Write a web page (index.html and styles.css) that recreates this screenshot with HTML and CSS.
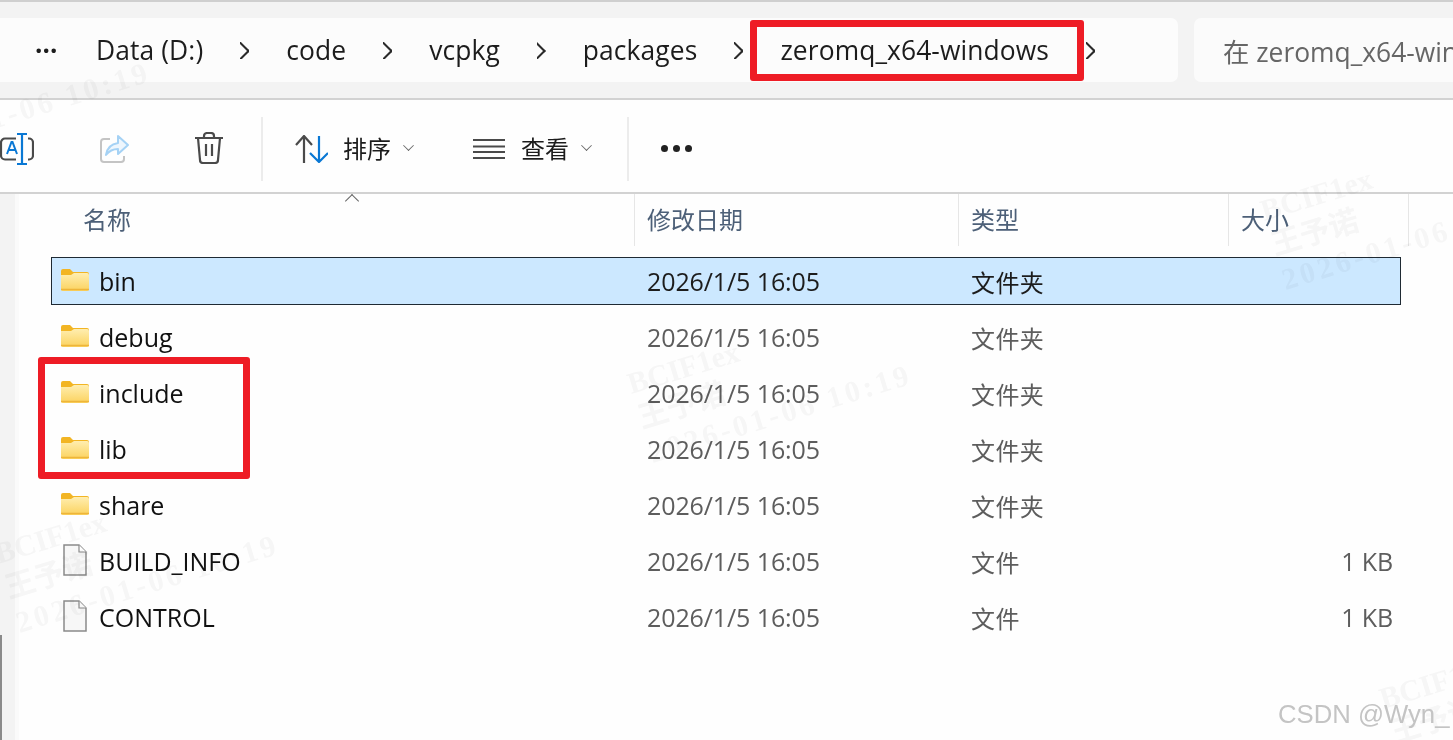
FILE: index.html
```html
<!DOCTYPE html>
<html lang="zh">
<head>
<meta charset="utf-8">
<title>zeromq_x64-windows</title>
<link rel="stylesheet" href="styles.css">
</head>
<body>
<svg class="defs" width="0" height="0">
  <defs>
    <linearGradient id="fg" x1="0" y1="0" x2="0" y2="1"><stop offset="0" stop-color="#ffeeb0"/><stop offset="1" stop-color="#fbd25e"/></linearGradient>
    <symbol id="folder" viewBox="0 0 28 22">
      <path d="M0 2a2 2 0 0 1 2-2h7l3 3h14a2 2 0 0 1 2 2v4H0z" fill="#f2b524"/>
      <path d="M0 6h10l3-2h13a2 2 0 0 1 2 2v14a2 2 0 0 1-2 2H2a2 2 0 0 1-2-2z" fill="url(#fg)"/>
      <path d="M0 20.500h28" stroke="#eeb53a" stroke-width="1.500"/>
    </symbol>
    <symbol id="file" viewBox="0 0 24 32">
      <path d="M1 1h15l7 7v23H1z" fill="#f7f7f7" stroke="#8a8a8a" stroke-width="1.500"/>
      <path d="M16 1v7h7" fill="#fff" stroke="#8a8a8a" stroke-width="1.200"/>
    </symbol>
  </defs>
</svg>
<div class="window">
  <header class="topbar">
    <nav class="address">
      <span class="more">···</span>
      <span>Data (D:)</span><span class="chev"></span>
      <span>code</span><span class="chev"></span>
      <span>vcpkg</span><span class="chev"></span>
      <span>packages</span><span class="chev"></span>
      <span>zeromq_x64-windows</span><span class="chev"></span>
    </nav>
    <div class="search">在 zeromq_x64-windows 中搜索</div>
  </header>
  <section class="toolbar">
    <svg class="ic-rename" width="34" height="32" viewBox="0 0 34 32" fill="none">
      <path d="M16 5.500H5a4 4 0 0 0-4 4v13a4 4 0 0 0 4 4h11M28 5.500h1a4 4 0 0 1 4 4v13a4 4 0 0 1-4 4h-1" stroke="#4a4a4a" stroke-width="2.200"/>
      <path d="M17 1h10M17 31h10M22 1v30" stroke="#0a78d4" stroke-width="2.200"/>
      <path d="M7 21l4.500-12h1L17 21M8.500 17h7" stroke="#0a78d4" stroke-width="2"/>
    </svg>
    <svg class="ic-share" width="30" height="30" viewBox="0 0 30 30" fill="none">
      <path d="M11 5H5a3 3 0 0 0-3 3v17a3 3 0 0 0 3 3h17a3 3 0 0 0 3-3v-3" stroke="#c4c4c4" stroke-width="2"/>
      <path d="M19 2l10 9-10 9v-5c-5 0-9 2-12 6 1-7 5-11 12-12z" fill="#eef6fd" stroke="#a5d2f5" stroke-width="2" stroke-linejoin="round"/>
    </svg>
    <svg class="ic-trash" width="28" height="32" viewBox="0 0 28 32" fill="none" stroke="#4a4a4a" stroke-width="2.200">
      <path d="M0 6h28M9 6V4a3 3 0 0 1 3-3h4a3 3 0 0 1 3 3v2"/>
      <path d="M3 6l2 22a3 3 0 0 0 3 3h12a3 3 0 0 0 3-3l2-22"/>
      <path d="M11 12v12M17 12v12"/>
    </svg>
    <span class="tool-sep"></span>
    <svg class="ic-sort" width="33" height="28" viewBox="0 0 33 28" fill="none" stroke-width="2.200">
      <path d="M1 10l8-9 8 9M9 1v27" stroke="#4a4a4a"/>
      <path d="M15 18l9 9 9-9M24 27V1" stroke="#0a78d4"/>
    </svg>
    <span class="tool-label sort-label">排序</span>
    <span class="caret"></span>
    <svg class="ic-view" width="32" height="20" viewBox="0 0 32 20" stroke="#4a4a4a" stroke-width="2"><path d="M0 1h32M0 7.500h32M0 13h32M0 19h32"/></svg>
    <span class="tool-label view-label">查看</span>
    <span class="caret"></span>
    <span class="tool-sep sep-two"></span>
    <span class="tool-dots"><i></i><i></i><i></i></span>
  </section>
  <main class="content">
    <div class="list-head">
      <span class="sort-up"></span>
      <div class="th th-name">名称</div>
      <div class="th th-date">修改日期</div>
      <div class="th th-type">类型</div>
      <div class="th th-size">大小</div>
      <div class="th-rest"></div>
    </div>
    <div class="rows">
      <div class="row selected"><svg class="ico"><use href="#folder"/></svg><span class="name">bin</span><span class="date">2026/1/5 16:05</span><span class="type">文件夹</span><span class="size"></span></div>
      <div class="row"><svg class="ico"><use href="#folder"/></svg><span class="name">debug</span><span class="date">2026/1/5 16:05</span><span class="type">文件夹</span><span class="size"></span></div>
      <div class="row"><svg class="ico"><use href="#folder"/></svg><span class="name">include</span><span class="date">2026/1/5 16:05</span><span class="type">文件夹</span><span class="size"></span></div>
      <div class="row"><svg class="ico"><use href="#folder"/></svg><span class="name">lib</span><span class="date">2026/1/5 16:05</span><span class="type">文件夹</span><span class="size"></span></div>
      <div class="row"><svg class="ico"><use href="#folder"/></svg><span class="name">share</span><span class="date">2026/1/5 16:05</span><span class="type">文件夹</span><span class="size"></span></div>
      <div class="row"><svg class="ico ico-file"><use href="#file"/></svg><span class="name">BUILD_INFO</span><span class="date">2026/1/5 16:05</span><span class="type">文件</span><span class="size">1 KB</span></div>
      <div class="row"><svg class="ico ico-file"><use href="#file"/></svg><span class="name">CONTROL</span><span class="date">2026/1/5 16:05</span><span class="type">文件</span><span class="size">1 KB</span></div>
    </div>
  </main>
  <div class="wm wm1">BCIF1ex<br>王予诺<br><span class="wm-date">2026-01-06 10:19</span></div>
  <div class="wm wm2">BCIF1ex<br>王予诺<br><span class="wm-date">2026-01-06 10:19</span></div>
  <div class="wm wm3">BCIF1ex<br>王予诺<br><span class="wm-date">2026-01-06 10:19</span></div>
  <div class="wm wm4">BCIF1ex<br>王予诺<br><span class="wm-date">2026-01-06 10:19</span></div>
  <div class="wm wm5"><span class="wm-date">2026-01-06 10:19</span></div>
  <div class="red-box box-path"></div>
  <div class="red-box box-dirs"></div>
  <div class="scroll-mark"></div>
  <div class="credit">CSDN @Wyn_</div>
</div>
</body>
</html>
```
FILE: styles.css
```css
* { box-sizing: border-box; }
html, body { margin: 0; padding: 0; }
body { background: #fefefe; font-family: "Open Sans", "Noto Sans CJK SC", sans-serif; overflow: hidden; }
.defs { position: absolute; }
.window { position: relative; width: 1453px; height: 740px; overflow: hidden; }

.topbar { height: 100px; background: #f3f3f3; border-top: 2px solid #cfcfcf; border-bottom: 2px solid #d2d2d2; padding-top: 16px; display: flex; gap: 16px; }
.address { width: 1178px; height: 64px; background: #fcfcfc; border-radius: 0 7px 7px 0; display: flex; align-items: center; gap: 37px; padding-left: 35px; font-size: 26.400px; letter-spacing: 0.100px; color: #1c1c1c; white-space: nowrap; }
.more { width: 24px; font-size: 26px; font-weight: 700; line-height: 1; }
.chev { width: 9px; height: 17px; flex: none; position: relative; overflow: hidden; }
.chev::before { content: ""; position: absolute; right: 2.500px; top: 2.500px; width: 12px; height: 12px; border-top: 2px solid #2a2a2a; border-right: 2px solid #2a2a2a; transform: rotate(45deg); }
.search { flex: 1; height: 64px; background: #fbfbfb; border-radius: 7px 0 0 7px; padding-left: 29px; display: flex; align-items: center; font-size: 26.400px; color: #666; white-space: nowrap; overflow: hidden; }

.toolbar { height: 94px; padding-top: 5px; border-bottom: 2px solid #d2d2d2; display: flex; align-items: center; background: #fefefe; }
.ic-rename { flex: none; }
.ic-share { margin-left: 65px; flex: none; }
.ic-trash { margin-left: 66px; flex: none; margin-top: -2px; }
.tool-sep { width: 2px; height: 64px; background: #ececec; margin-left: 38px; flex: none; }
.ic-sort { margin-left: 32px; flex: none; }
.tool-label { font-size: 24px; color: #1c1c1c; line-height: 1; }
.sort-label { margin-left: 15px; }
.view-label { margin-left: 16px; }
.caret { width: 9px; height: 9px; margin-left: 13px; margin-top: -6px; border-right: 1.500px solid #666; border-bottom: 1.500px solid #666; transform: rotate(45deg) scale(0.85); flex: none; }
.ic-view { margin-left: 60px; flex: none; }
.sep-two { margin-left: 36px; }
.tool-dots { margin-left: 32px; display: flex; gap: 5px; }
.tool-dots i { width: 7px; height: 7px; border-radius: 50%; background: #222; }

.content { height: 546px; margin-left: 15px; border-left: 4px solid #fafafa; box-shadow: -15px 0 0 #f3f3f3; background: #fefefe; }
.list-head { position: relative; height: 51px; display: grid; grid-template-columns: 616px 324px 270px 180px 1fr; }
.th { font-size: 24px; color: #4d6078; padding-left: 12px; border-right: 1px solid #e6e6e6; line-height: 52px; }
.th-name { padding-left: 64px; }
.sort-up { position: absolute; left: 328px; top: 2px; width: 10px; height: 10px; border-left: 1px solid #666; border-top: 1px solid #666; transform: rotate(45deg); }
.rows { padding: 12px 52px 0 32px; display: flex; flex-direction: column; gap: 8px; }
.row { height: 48px; display: grid; grid-template-columns: 47px 548px 324px 1fr 60px; align-items: center; border: 1px solid transparent; font-size: 25px; letter-spacing: -0.1px; color: #5d5d5d; white-space: nowrap; }
.row.selected { background: #cce8ff; border-color: #1f2a33; color: #1c1c1c; }
.row .name { color: #111; letter-spacing: 0; }
.ico { width: 28px; height: 22px; margin-left: 9px; margin-top: -2px; }
.ico-file { height: 32px; }
.type { font-size: 24px; letter-spacing: 0.400px; }
.size { text-align: right; padding-right: 7px; }

.red-box { position: absolute; border: 7px solid #ee1c25; border-radius: 3px; }
.box-path { left: 750px; top: 20px; width: 334px; height: 61px; }
.box-dirs { left: 38px; top: 357px; width: 212px; height: 122px; }
.scroll-mark { position: absolute; left: 0; top: 635px; width: 2px; height: 105px; background: #8a8a8a; }
.credit { position: absolute; left: 1278px; top: 700px; font-family: "Liberation Sans", sans-serif; font-size: 25.700px; color: #c4c4c4; white-space: nowrap; }

.wm { position: absolute; font-family: "Liberation Serif", "Noto Sans CJK SC", serif; font-weight: 700; font-size: 30px; line-height: 36px; color: #f7f7f7; transform: rotate(-17deg); white-space: nowrap; mix-blend-mode: multiply; }
.wm-date { letter-spacing: 3.500px; }
.wm1 { left: 1266px; top: 152px; }
.wm2 { left: 633px; top: 325px; }
.wm3 { left: 0; top: 495px; }
.wm4 { left: 1385px; top: 640px; }
.wm5 { left: -118px; top: 93px; }
```
